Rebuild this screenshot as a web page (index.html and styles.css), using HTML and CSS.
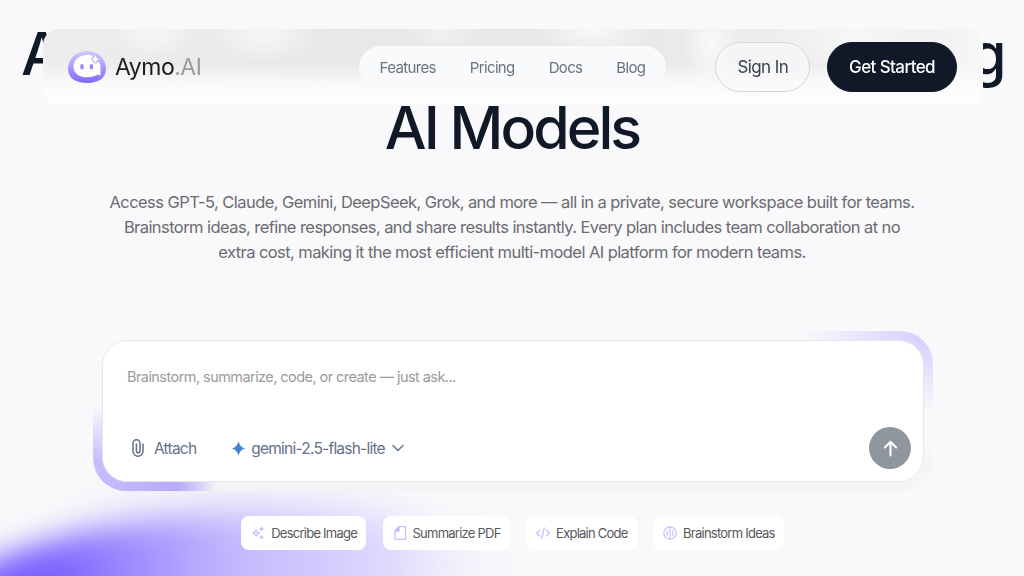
FILE: index.html
```html
<!DOCTYPE html>
<html lang="en">
  <head>
    <meta charset="utf-8" />
    <meta name="viewport" content="width=device-width, initial-scale=1" />
    <title>Aymo.AI</title>
    <link rel="stylesheet" href="styles.css">
  </head>

  <body>
    <header class="navbar">
      <a class="logo" href="#">
        <svg class="logo-mark" viewBox="0 0 38 32">
          <defs>
            <linearGradient id="logoFill" x1="0" y1="0" x2="0" y2="1">
              <stop offset="0" stop-color="#d3caff" />
              <stop offset="1" stop-color="#8068fb" />
            </linearGradient>
          </defs>
          <path fill="url(#logoFill)" d="M19 0C30 0 38 8 38 18C38 27 30 32 19 32C8 32 0 27 0 18C0 8 8 0 19 0Z" />
          <path fill="#fff" d="M19 4C21.500 4 23.500 4.500 25 5.300L22.500 8L27 12.800L30.500 10.500C32 12 32.500 14 32.500 16V24.500C31.500 24.500 30.500 24 29.500 23.500C27 25.300 23 26.300 19 26.300C11 26.300 5.500 22 5.500 15.700C5.500 9 11.500 4 19 4Z" />
          <path fill="#fff" d="M27.300 4L28.600 6.900L31.500 8.200L28.600 9.500L27.300 12.400L26 9.500L23.100 8.200L26 6.900Z" />
          <rect x="12.300" y="13" width="3.400" height="5.500" rx="1.700" fill="#9a88f8" />
          <rect x="21.700" y="13" width="3.400" height="5.500" rx="1.700" fill="#9a88f8" />
        </svg>
        <span class="logo-text">Aymo<span class="logo-suffix">.AI</span></span>
      </a>
      <nav class="menu">
        <a href="#">Features</a>
        <a href="#">Pricing</a>
        <a href="#">Docs</a>
        <a href="#">Blog</a>
      </nav>
      <div class="actions">
        <a class="btn btn-outline" href="#">Sign In</a>
        <a class="btn btn-dark" href="#">Get Started</a>
      </div>
    </header>

    <main class="hero">
      <div class="glow"></div>
      <h1 class="title"><span class="title-lead">All-in-One AI Platform for Every Leading</span><br>AI Models</h1>
      <p class="subtitle">
        Access GPT-5, Claude, Gemini, DeepSeek, Grok, and more — all in a private, secure workspace built for teams.<br>
        Brainstorm ideas, refine responses, and share results instantly. Every plan includes team collaboration at no<br>
        extra cost, making it the most efficient multi-model AI platform for modern teams.
      </p>

      <div class="prompt-ring">
        <div class="prompt">
          <div class="placeholder">Brainstorm, summarize, code, or create — just ask...</div>
          <div class="toolbar">
            <button class="tool attach">
              <svg class="icon-clip" viewBox="0 0 12 18" fill="none" stroke="currentColor" stroke-width="1.500" stroke-linecap="round">
                <path d="M11 5V12.300A5 5 0 0 1 1 12.300V4.200A3.500 3.500 0 0 1 8 4.200V12A1.800 1.800 0 0 1 4.400 12V5" />
              </svg>
              Attach
            </button>
            <button class="tool model">
              <svg class="icon-gemini" viewBox="0 0 16 16">
                <defs>
                  <linearGradient id="gem" x1="0" y1="0" x2="1" y2="0">
                    <stop offset="0" stop-color="#6f79c8" />
                    <stop offset=".55" stop-color="#3f7fd6" />
                    <stop offset="1" stop-color="#4f9be8" />
                  </linearGradient>
                </defs>
                <path fill="url(#gem)" d="M8 0C8.700 4.500 11.500 7.300 16 8C11.500 8.700 8.700 11.500 8 16C7.300 11.500 4.500 8.700 0 8C4.500 7.300 7.300 4.500 8 0Z" />
              </svg>
              <span>gemini-2.5-flash-lite</span>
              <svg class="icon-chevron" viewBox="0 0 12 8" fill="none" stroke="currentColor" stroke-width="1.400" stroke-linecap="round" stroke-linejoin="round">
                <path d="M1 1.500L6 6.500L11 1.500" />
              </svg>
            </button>
            <button class="send">
              <svg viewBox="0 0 16 18" fill="none" stroke="#fff" stroke-width="2.200" stroke-linecap="round" stroke-linejoin="round">
                <path d="M8 16.500V2M2 8L8 1.800L14 8" />
              </svg>
            </button>
          </div>
        </div>
      </div>

      <div class="chips">
        <button class="chip">
          <svg viewBox="0 0 14 14" fill="none" stroke="currentColor" stroke-width="1.300" stroke-linejoin="round">
            <path d="M5 3.800L6.100 5.900L8.200 7L6.100 8.100L5 10.200L3.900 8.100L1.800 7L3.900 5.900Z" />
            <path d="M10.500 1V5M8.500 3H12.500M10.500 9.500V13M8.700 11.200H12.300" stroke-width="1.600" />
          </svg>
          Describe Image
        </button>
        <button class="chip">
          <svg viewBox="0 0 14 14" fill="none" stroke="currentColor" stroke-width="1.300" stroke-linejoin="round">
            <path d="M6 .7H12.500V13.300H2V5Z" />
            <path d="M6 .7V5H2Z" fill="currentColor" />
          </svg>
          Summarize PDF
        </button>
        <button class="chip">
          <svg viewBox="0 0 14 14" fill="none" stroke="currentColor" stroke-width="1.300" stroke-linecap="round" stroke-linejoin="round">
            <path d="M3.500 4L.7 7L3.500 10M10.500 4L13.300 7L10.500 10M8.300 2L5.700 12.500" />
          </svg>
          Explain Code
        </button>
        <button class="chip">
          <svg viewBox="0 0 14 14" fill="none" stroke="currentColor" stroke-width="1.200" stroke-linecap="round">
            <circle cx="7" cy="7" r="6.200" />
            <path d="M7 1V13M4.200 4.500V9.500M9.800 4.500V9.500" />
          </svg>
          Brainstorm Ideas
        </button>
      </div>
    </main>
  </body>
</html>
```

FILE: styles.css
```css
* {
  box-sizing: border-box;
}
body {
  margin: 0;
  height: 576px;
  overflow: hidden;
  background-color: #f9f9fb;
  font-family: Inter, "Liberation Sans", sans-serif;
  color: #111827;
}
a {
  color: inherit;
  text-decoration: none;
}
button {
  border: 0;
  padding: 0;
  background: none;
  font-family: inherit;
  cursor: pointer;
}

/* navbar */
.navbar {
  position: fixed;
  z-index: 10;
  top: 29px;
  left: 43px;
  width: 940px;
  height: 76px;
  padding: 0 26px 0 25px;
  display: grid;
  grid-template-columns: 1fr auto 1fr;
  align-items: center;
  border-radius: 16px;
  background:
    linear-gradient(180deg, rgba(253, 253, 253, 0) 45%, rgba(253, 253, 253, 0.75) 70%, #fdfdfd 90%),
    radial-gradient(45px 26px at 110px 4px, rgba(248, 248, 249, 0.9), rgba(248, 248, 249, 0)),
    radial-gradient(55px 28px at 220px 6px, rgba(248, 248, 249, 0.9), rgba(248, 248, 249, 0)),
    radial-gradient(40px 26px at 400px 0, rgba(248, 248, 249, 0.6), rgba(248, 248, 249, 0)),
    radial-gradient(60px 26px at 550px 2px, rgba(250, 250, 250, 0.9), rgba(250, 250, 250, 0)),
    radial-gradient(30px 45px at 668px 14px, rgba(250, 250, 250, 0.9), rgba(250, 250, 250, 0)),
    radial-gradient(90px 36px at 815px 6px, rgba(248, 248, 249, 0.9), rgba(248, 248, 249, 0)),
    linear-gradient(90deg, #ededee 0, #e7e8e9 30%, #e6e7e8 60%, #ededee 75%, #eeeeef 92%, #f7f7f8 100%);
}
.logo {
  display: flex;
  align-items: center;
  gap: 9px;
}
.logo-mark {
  width: 38px;
  height: 32px;
}
.logo-text {
  font-size: 23px;
  letter-spacing: -0.5px;
  color: #1c1c1e;
}
.logo-suffix {
  color: #9b9b9d;
}
.menu {
  height: 43px;
  padding: 0 21px;
  display: flex;
  align-items: center;
  gap: 34px;
  border-radius: 22px;
  background-color: #f9fafb;
  font-size: 15px;
  letter-spacing: -0.65px;
  color: #6b7280;
}
.actions {
  display: flex;
  justify-content: flex-end;
  gap: 17px;
}
.btn {
  height: 50px;
  padding: 0 21px;
  display: flex;
  align-items: center;
  border: 1px solid #d5d7db;
  border-radius: 25px;
  font-size: 17px;
  font-weight: 500;
  letter-spacing: -0.6px;
}
.btn-outline {
  font-weight: 400;
  background-color: rgba(250, 250, 251, 0.55);
  color: #374151;
}
.btn-dark {
  border-color: #111827;
  background-color: #111827;
  color: #fff;
}

/* hero */
.hero {
  position: relative;
  height: 576px;
  padding-top: 17px;
  display: flex;
  flex-direction: column;
  align-items: center;
  overflow: hidden;
}
.hero > * {
  position: relative;
  flex-shrink: 0;
}
.hero > .glow {
  position: absolute;
  left: -90px;
  top: 514px;
  width: 720px;
  height: 260px;
  border-radius: 50%;
  background: linear-gradient(90deg, #7860ff 24%, #9d8cff 34%, #c2b8fe 44%, #dcd6fe 58%, rgba(236, 233, 253, 0.7) 70%, rgba(248, 247, 254, 0) 85%);
  filter: blur(15px);
}
.glow::before {
  content: "";
  position: absolute;
  left: 150px;
  top: -22px;
  width: 380px;
  height: 140px;
  border-radius: 50%;
  background-color: rgba(190, 178, 255, 0.28);
  filter: blur(18px);
}
.title {
  margin: 0;
  font-size: 59px;
  font-weight: 500;
  line-height: 74px;
  letter-spacing: -0.05em;
  text-align: center;
  white-space: nowrap;
}
.title-lead {
  letter-spacing: -0.06em;
  word-spacing: -1.500px;
}
.subtitle {
  margin: 25px 0 0;
  font-size: 16.500px;
  line-height: 25px;
  letter-spacing: -0.57px;
  text-align: center;
  white-space: nowrap;
  color: #6b6b70;
}

/* prompt box */
.prompt-ring {
  width: 840px;
  height: 160px;
  margin: 66px 0 0 2px;
  padding: 9px;
  border-radius: 33px;
  background:
    linear-gradient(90deg, #c8bdfc 0, #b9a9fb 85px, rgba(185, 169, 251, 0) 125px) left bottom / 130px 30px no-repeat,
    linear-gradient(0deg, #c8bdfc 0, rgba(215, 207, 253, 0) 100%) left 75px / 60px 55px no-repeat,
    radial-gradient(130px 80px at 100% 0, #d9d2ff 15%, rgba(217, 210, 255, 0) 100%),
    linear-gradient(180deg, #f9f9fb 60%, #f4f4f7 100%);
}
.prompt {
  height: 142px;
  padding: 27px 12px 12px 24px;
  display: flex;
  flex-direction: column;
  justify-content: space-between;
  border: 1px solid #e5e7eb;
  border-radius: 25px;
  background-color: #fff;
}
.placeholder {
  font-size: 14.500px;
  line-height: 18px;
  letter-spacing: -0.56px;
  color: #9a9a9c;
}
.toolbar {
  display: flex;
  align-items: center;
}
.tool {
  display: flex;
  align-items: center;
  font-size: 15.500px;
  letter-spacing: -0.05em;
  color: #64708a;
}
.attach {
  margin-left: 5px;
  gap: 10px;
}
.model {
  margin-left: 35px;
  gap: 5px;
}
.icon-clip {
  width: 12px;
  height: 18px;
}
.icon-gemini {
  width: 15px;
  height: 15px;
}
.icon-chevron {
  width: 12px;
  height: 8px;
  margin-left: 2px;
}
.send {
  width: 42px;
  height: 42px;
  margin-left: auto;
  display: flex;
  align-items: center;
  justify-content: center;
  border-radius: 50%;
  background-color: #8f969e;
}
.send svg {
  width: 15px;
  height: 17px;
}

/* suggestions */
.chips {
  margin: 25px 0 0 1px;
  display: flex;
  gap: 16.500px;
}
.chip {
  height: 34px;
  padding: 0 9px 0 10px;
  display: flex;
  align-items: center;
  gap: 6px;
  border-radius: 8px;
  background-color: #fff;
  font-size: 13px;
  letter-spacing: -0.76px;
  color: #58585c;
}
.chip svg {
  width: 14px;
  height: 14px;
  color: #c9bffd;
}
```
